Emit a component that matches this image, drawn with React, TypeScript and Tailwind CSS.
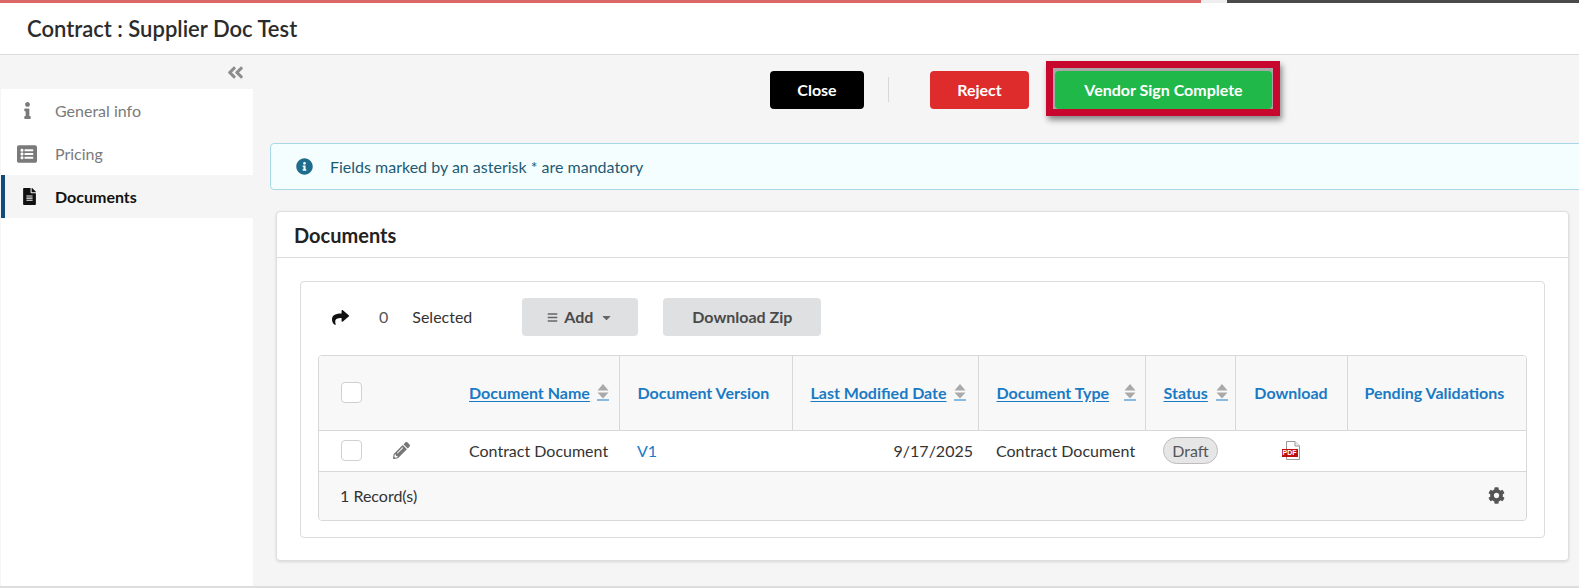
import React from 'react';
import {
  FaAngleDoubleLeft,
  FaBars,
  FaCaretDown,
  FaCog,
  FaFileAlt,
  FaInfo,
  FaInfoCircle,
  FaListAlt,
  FaPencilAlt,
  FaShare,
} from 'react-icons/fa';

const SortIcon: React.FC = () => (
  <svg width="12" height="19" viewBox="0 0 12 19" className="shrink-0">
    <path d="M6 1 L11.5 7.5 H0.5 Z" fill="#a9a9a9" />
    <path d="M0.5 9.5 H11.5 L6 15.5 Z" fill="#a9a9a9" />
    <rect x="0" y="16.5" width="12" height="1" fill="#1a7ac4" />
  </svg>
);

const PdfIcon: React.FC = () => (
  <div className="relative h-[19px] w-[19px]">
    <svg width="19" height="19" viewBox="0 0 19 19" className="absolute inset-0">
      <path d="M4.5 .5 H13 L17.5 5 V18.5 H4.5 Z" fill="#fff" stroke="#9a9a9a" />
      <path d="M13 .5 V5 H17.5" fill="#eee" stroke="#9a9a9a" />
      <rect x="0" y="8" width="16" height="8" fill="#c00d0d" />
    </svg>
    <span className="absolute left-0 top-[8px] w-4 text-center font-['Liberation_Sans',sans-serif] text-[7px] leading-[8px] font-bold text-white">
      PDF
    </span>
  </div>
);

const Checkbox: React.FC = () => (
  <div className="h-[21px] w-[21px] rounded-[4px] border border-[#d0d0d0] bg-white" />
);

const SortHeader: React.FC<{ label: string; gap: string }> = ({ label, gap }) => (
  <div className={`flex items-center ${gap}`}>
    <a className="underline underline-offset-2">{label}</a>
    <SortIcon />
  </div>
);

const navItems = [
  { label: 'General info', icon: <FaInfo className="text-[17px]" /> },
  { label: 'Pricing', icon: <FaListAlt className="text-[20px]" /> },
];

const App: React.FC = () => {
  return (
    <div className="flex h-[588px] w-[1579px] flex-col overflow-hidden bg-[#f5f5f5] font-['Lato',sans-serif] text-[16px] text-[#333]">
      <div className="flex h-[3px] shrink-0">
        <div className="w-[1201px] bg-[#dc6767]" />
        <div className="w-[26px] bg-[#eeeeee]" />
        <div className="flex-1 bg-[#4a4a4a]" />
      </div>

      <div className="flex h-[52px] shrink-0 items-center border-b border-[#dcdcdc] bg-white pl-[27px] text-[22px] font-semibold text-[#2b2b2b]">
        Contract : Supplier Doc Test
      </div>

      <div className="flex min-h-0 flex-1">
        <aside className="ml-px flex w-[252px] shrink-0 flex-col">
          <div className="flex h-[34px] items-center justify-end pr-[8px] text-[#8d8d8d]">
            <FaAngleDoubleLeft className="text-[19px]" />
          </div>
          <div className="flex-1 bg-white">
            {navItems.map((item) => (
              <div key={item.label} className="flex h-[43px] items-center text-[#7a7a7a]">
                <div className="flex w-[54px] justify-center pr-[2px]">{item.icon}</div>
                <span>{item.label}</span>
              </div>
            ))}
            <div className="flex h-[43px] items-center border-l-4 border-[#0f4c7c] bg-[#f5f5f5] font-bold text-[#111]">
              <div className="flex w-[50px] justify-center pr-[2px]">
                <FaFileAlt className="text-[17px]" />
              </div>
              <span>Documents</span>
            </div>
          </div>
        </aside>

        <main className="min-w-0 flex-1 pr-[10px]">
          <div className="relative flex h-[88px] items-start pt-[16px] pl-[517px] font-bold text-white">
            <button className="h-[38px] w-[94px] rounded-[4px] bg-black">Close</button>
            <div className="mx-6 mt-[6px] h-[25px] w-px bg-[#d8d8d8]" />
            <button className="ml-[17px] h-[38px] w-[99px] rounded-[4px] bg-[#de2b2b]">Reject</button>
            <div className="-mt-[10px] ml-[17px] h-[55px] w-[234px] border-[7px] border-t-[7px] border-[#c8072f] bg-[#a8a8a8] pt-[3px] pl-[2px] pr-[1px] shadow-[2px_4px_6px_rgba(0,0,0,0.45)]">
              <button className="h-[38px] w-full rounded-[4px] bg-[#21b84a]">Vendor Sign Complete</button>
            </div>
          </div>

          <div className="-mr-[30px] ml-[17px] flex h-[47px] items-center rounded-[4px] border border-[#a8d8e5] bg-[#f5feff] pl-[25px] text-[#1d5a73]">
            <FaInfoCircle className="mr-[17px] text-[17px] text-[#1f6d8c]" />
            <span>Fields marked by an asterisk * are mandatory</span>
          </div>

          <section className="mt-[21px] ml-[23px] h-[350px] rounded-[4px] border border-[#dedede] bg-white shadow-[0_1px_3px_rgba(0,0,0,0.12)]">
            <div className="flex h-[46px] items-center border-b border-[#dcdcdc] pl-[17px] text-[20px] font-bold text-[#222]">
              Documents
            </div>
            <div className="mx-[23px] mt-[23px] h-[257px] rounded-[4px] border border-[#dcdcdc] px-[17px] pt-[16px]">
              <div className="flex h-[38px] items-center">
                <FaShare className="ml-[14px] text-[17px] text-[#111]" />
                <span className="ml-[30px] text-[#555]">0</span>
                <span className="ml-[24px]">Selected</span>
                <button className="ml-[50px] flex h-[38px] w-[116px] items-center justify-center rounded-[4px] bg-[#dfe0e2] font-bold text-[#4a4a4a]">
                  <FaBars className="mr-[6px] text-[11px] text-[#666]" />
                  Add
                  <FaCaretDown className="ml-[7px] text-[13px] text-[#666]" />
                </button>
                <button className="ml-[25px] h-[38px] w-[158px] rounded-[4px] bg-[#dfe0e2] font-bold text-[#4a4a4a]">
                  Download Zip
                </button>
              </div>

              <div className="mt-[19px] overflow-hidden rounded-[4px] border border-[#d8d8d8]">
                <table className="w-full table-fixed border-collapse">
                  <colgroup>
                    <col className="w-[68px]" />
                    <col className="w-[75px]" />
                    <col className="w-[157px]" />
                    <col className="w-[173px]" />
                    <col className="w-[186px]" />
                    <col className="w-[167px]" />
                    <col className="w-[90px]" />
                    <col className="w-[112px]" />
                    <col />
                  </colgroup>
                  <thead>
                    <tr className="h-[74px] border-b border-[#d8d8d8] bg-[#f8f8f8] text-left font-bold text-[#1a7ac4]">
                      <th className="pl-[22px] align-middle">
                        <Checkbox />
                      </th>
                      <th />
                      <th className="border-r border-[#d8d8d8] pl-[7px] font-bold">
                        <SortHeader label="Document Name" gap="gap-[7px]" />
                      </th>
                      <th className="border-r border-[#d8d8d8] pl-[18px] font-bold">Document Version</th>
                      <th className="border-r border-[#d8d8d8] pl-[18px] font-bold">
                        <SortHeader label="Last Modified Date" gap="gap-[7px]" />
                      </th>
                      <th className="border-r border-[#d8d8d8] pl-[18px] font-bold">
                        <SortHeader label="Document Type" gap="gap-[15px]" />
                      </th>
                      <th className="border-r border-[#d8d8d8] pl-[18px] font-bold">
                        <SortHeader label="Status" gap="gap-[8px]" />
                      </th>
                      <th className="border-r border-[#d8d8d8] text-center font-bold">Download</th>
                      <th className="pl-[17px] font-bold">Pending Validations</th>
                    </tr>
                  </thead>
                  <tbody>
                    <tr className="h-[41px] border-b border-[#d8d8d8] bg-white">
                      <td className="pl-[22px]">
                        <Checkbox />
                      </td>
                      <td className="pl-[6px]">
                        <FaPencilAlt className="text-[17px] text-[#777]" />
                      </td>
                      <td className="pl-[7px] whitespace-nowrap">Contract Document</td>
                      <td className="pl-[18px] text-[#1a7ac4]">V1</td>
                      <td className="pr-[5px] text-right">9/17/2025</td>
                      <td className="pl-[18px] whitespace-nowrap">Contract Document</td>
                      <td className="pl-[18px]">
                        <span className="inline-flex h-[27px] w-[55px] items-center justify-center rounded-full border border-[#bdbdbd] bg-[#e6e6e6] text-[#555]">
                          Draft
                        </span>
                      </td>
                      <td>
                        <div className="flex justify-center">
                          <PdfIcon />
                        </div>
                      </td>
                      <td />
                    </tr>
                  </tbody>
                </table>
                <div className="flex h-[48px] items-center justify-between bg-[#f8f8f8] pr-[21px] pl-[21px]">
                  <span>1 Record(s)</span>
                  <FaCog className="text-[17px] text-[#555]" />
                </div>
              </div>
            </div>
          </section>
        </main>
      </div>
      <div className="h-[2px] shrink-0 bg-[#dddddd]" />
    </div>
  );
};

export default App;
